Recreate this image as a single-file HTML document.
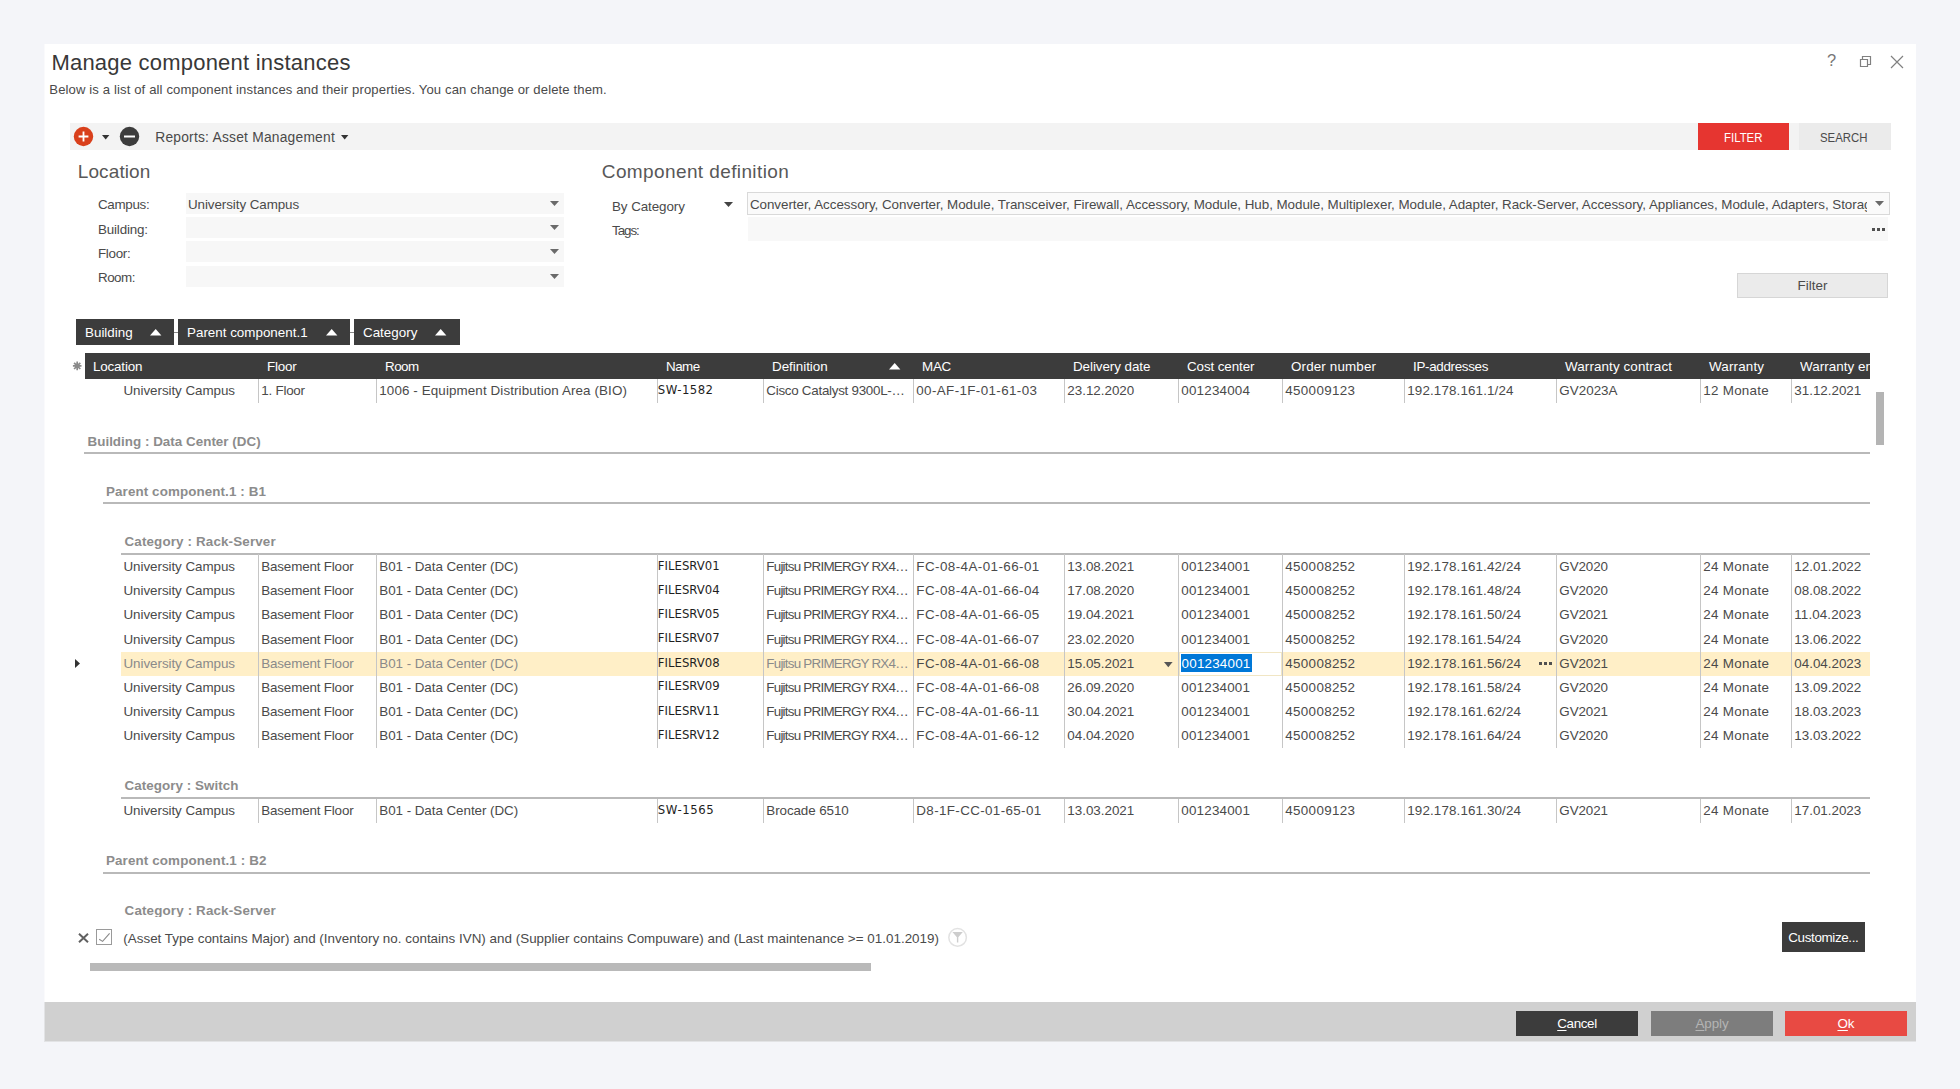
<!DOCTYPE html>
<html lang="en"><head><meta charset="utf-8"><title>Manage component instances</title>
<style>
html,body{margin:0;padding:0}
body{width:1960px;height:1089px;overflow:hidden;position:relative;background:#f4f5f9;font-family:"Liberation Sans",sans-serif;color:#404040}
.b{position:absolute}
.t{position:absolute;white-space:nowrap;color:#4a4a4a}
.w{color:#fff}
.g{color:#8a8a8a}
.gh{color:#8c8c8c;font-weight:bold}
.nm{color:#1e1e1e}
svg{position:absolute;overflow:visible}
u{text-decoration-thickness:1px;text-underline-offset:1.5px}
</style></head><body>

<div class="b" style="left:45px;top:44px;width:1871px;height:997px;background:#fff;"></div>
<div class="b" style="left:44px;top:44px;width:1px;height:958px;background:#fafafc;"></div>
<div class="b" style="left:45px;top:1041px;width:1871px;height:1px;background:#e2e3e5;"></div>
<div class="b" style="left:44px;top:1002px;width:1px;height:40px;background:#e2e3e5;"></div>
<div class="t" style="left:51.40px;top:50px;height:25px;line-height:25px;font-size:22px;letter-spacing:0.219px;color:#383838">Manage component instances</div>
<div class="t" style="left:49.30px;top:82px;height:15px;line-height:15px;font-size:13.1px;letter-spacing:0.123px;">Below is a list of all component instances and their properties. You can change or delete them.</div>
<div class="t" style="left:1827.00px;top:51px;height:18px;line-height:18px;font-size:16.5px;color:#777">?</div>
<svg style="left:1859px;top:55px" width="13" height="13" viewBox="0 0 13 13"><path d="M1.5 4.5h7v7h-7zM3.5 4.5v-3h8v8h-3" fill="none" stroke="#808080" stroke-width="1.2"/></svg>
<svg style="left:1890px;top:55px" width="14" height="14" viewBox="0 0 14 14"><path d="M1 1l12 12M13 1L1 13" fill="none" stroke="#808080" stroke-width="1.2"/></svg>
<div class="b" style="left:70px;top:123px;width:1821px;height:27px;background:#f3f3f3;"></div>
<svg style="left:73px;top:126px" width="21" height="21" viewBox="0 0 21 21"><circle cx="10.5" cy="10.5" r="9.7" fill="#d9401c"/><path d="M10.5 5.6v9.8M5.6 10.5h9.8" stroke="#fff" stroke-width="1.8" fill="none"/></svg>
<svg style="left:102px;top:134.5px" width="8" height="5" viewBox="0 0 8 5"><path d="M0 0h7.4L3.7 4.4z" fill="#333"/></svg>
<svg style="left:119px;top:126px" width="21" height="21" viewBox="0 0 21 21"><circle cx="10.5" cy="10.5" r="9.7" fill="#3d3d3d"/><path d="M5 10.5h11" stroke="#fff" stroke-width="2" fill="none"/></svg>
<div class="t" style="left:155.20px;top:130px;height:15px;line-height:15px;font-size:13.8px;letter-spacing:0.228px;">Reports: Asset Management</div>
<svg style="left:341px;top:134.5px" width="8" height="5" viewBox="0 0 8 5"><path d="M0 0h7.4L3.7 4.4z" fill="#333"/></svg>
<div class="b" style="left:1698px;top:123px;width:91px;height:27px;background:#e63530;"></div>
<div class="t w" style="left:1724.00px;top:130px;height:15px;line-height:15px;font-size:13.4px;transform-origin:0 0;transform:scaleX(0.8524);">FILTER</div>
<div class="b" style="left:1799px;top:123px;width:92px;height:27px;background:#ebebeb;"></div>
<div class="t" style="left:1820.00px;top:130px;height:15px;line-height:15px;font-size:13.4px;transform-origin:0 0;transform:scaleX(0.8505);">SEARCH</div>
<div class="t" style="left:77.80px;top:161px;height:21px;line-height:21px;font-size:19px;letter-spacing:0.095px;color:#585858">Location</div>
<div class="b" style="left:186px;top:193px;width:378px;height:21px;background:#f7f7f7;"></div>
<div class="t" style="left:98.00px;top:197px;height:15px;line-height:15px;font-size:13.4px;letter-spacing:-0.312px;">Campus:</div>
<svg style="left:550px;top:201px" width="10" height="6" viewBox="0 0 10 6"><path d="M0 0h9L4.5 5z" fill="#6a6a6a"/></svg>
<div class="b" style="left:186px;top:217px;width:378px;height:21px;background:#f7f7f7;"></div>
<div class="t" style="left:98.00px;top:222px;height:15px;line-height:15px;font-size:13.4px;letter-spacing:-0.163px;">Building:</div>
<svg style="left:550px;top:225px" width="10" height="6" viewBox="0 0 10 6"><path d="M0 0h9L4.5 5z" fill="#6a6a6a"/></svg>
<div class="b" style="left:186px;top:241px;width:378px;height:21px;background:#f7f7f7;"></div>
<div class="t" style="left:98.00px;top:246px;height:15px;line-height:15px;font-size:13.4px;letter-spacing:-0.311px;">Floor:</div>
<svg style="left:550px;top:249px" width="10" height="6" viewBox="0 0 10 6"><path d="M0 0h9L4.5 5z" fill="#6a6a6a"/></svg>
<div class="b" style="left:186px;top:266px;width:378px;height:21px;background:#f7f7f7;"></div>
<div class="t" style="left:98.00px;top:270px;height:15px;line-height:15px;font-size:13.4px;letter-spacing:-0.517px;">Room:</div>
<svg style="left:550px;top:274px" width="10" height="6" viewBox="0 0 10 6"><path d="M0 0h9L4.5 5z" fill="#6a6a6a"/></svg>
<div class="t" style="left:188.00px;top:197px;height:15px;line-height:15px;font-size:13.4px;letter-spacing:-0.075px;">University Campus</div>
<div class="t" style="left:601.80px;top:161px;height:21px;line-height:21px;font-size:19px;letter-spacing:0.391px;color:#585858">Component definition</div>
<div class="t" style="left:612.00px;top:199px;height:15px;line-height:15px;font-size:13.4px;letter-spacing:-0.073px;">By Category</div>
<svg style="left:724px;top:202px" width="10" height="6" viewBox="0 0 10 6"><path d="M0 0h9L4.5 5z" fill="#444"/></svg>
<div class="t" style="left:612.00px;top:223px;height:15px;line-height:15px;font-size:13.4px;letter-spacing:-1.057px;">Tags:</div>
<div class="b" style="left:747px;top:192px;width:1143px;height:23px;background:#fafafa;box-sizing:border-box;border:1px solid #d9d9d9"></div>
<div class="t" style="left:749.90px;top:197px;height:15px;line-height:15px;font-size:13.4px;width:1117.00px;overflow:hidden;letter-spacing:-0.04px">Converter, Accessory, Converter, Module, Transceiver, Firewall, Accessory, Module, Hub, Module, Multiplexer, Module, Adapter, Rack-Server, Accessory, Appliances, Module, Adapters, Storage</div>
<svg style="left:1875px;top:201px" width="10" height="6" viewBox="0 0 10 6"><path d="M0 0h9L4.5 5z" fill="#6a6a6a"/></svg>
<div class="b" style="left:748px;top:217px;width:1140px;height:24px;background:#f8f8f8;"></div>
<div class="b" style="left:1872px;top:228px;width:3px;height:3px;background:#505050;"></div>
<div class="b" style="left:1877px;top:228px;width:3px;height:3px;background:#505050;"></div>
<div class="b" style="left:1882px;top:228px;width:3px;height:3px;background:#505050;"></div>
<div class="b" style="left:1737px;top:273px;width:151px;height:25px;background:#ebebeb;box-sizing:border-box;border:1px solid #d6d6d6"></div>
<div class="t" style="left:1737.00px;top:278px;height:15px;line-height:15px;font-size:13.4px;width:151.00px;overflow:hidden;text-align:center">Filter</div>
<div class="b" style="left:174px;top:332px;width:4px;height:1px;background:#888;"></div>
<div class="b" style="left:350px;top:332px;width:4px;height:1px;background:#888;"></div>
<div class="b" style="left:76px;top:319px;width:98px;height:26px;background:#3c3c3c;"></div>
<div class="t w" style="left:85.00px;top:325px;height:15px;line-height:15px;font-size:13.4px;">Building</div>
<svg style="left:150px;top:329px" width="12" height="7" viewBox="0 0 12 7"><path d="M0 6.6h11.4L5.7 0z" fill="#fff"/></svg>
<div class="b" style="left:178px;top:319px;width:172px;height:26px;background:#3c3c3c;"></div>
<div class="t w" style="left:187.00px;top:325px;height:15px;line-height:15px;font-size:13.4px;">Parent component.1</div>
<svg style="left:326px;top:329px" width="12" height="7" viewBox="0 0 12 7"><path d="M0 6.6h11.4L5.7 0z" fill="#fff"/></svg>
<div class="b" style="left:354px;top:319px;width:106px;height:26px;background:#3c3c3c;"></div>
<div class="t w" style="left:363.00px;top:325px;height:15px;line-height:15px;font-size:13.4px;">Category</div>
<svg style="left:435px;top:329px" width="12" height="7" viewBox="0 0 12 7"><path d="M0 6.6h11.4L5.7 0z" fill="#fff"/></svg>
<div class="b" style="left:85px;top:353px;width:1785px;height:26px;background:#3c3c3c;"></div>
<div class="t w" style="left:93.00px;top:359px;height:15px;line-height:15px;font-size:13.4px;letter-spacing:-0.166px;">Location</div>
<div class="t w" style="left:267.00px;top:359px;height:15px;line-height:15px;font-size:13.4px;letter-spacing:-0.195px;">Floor</div>
<div class="t w" style="left:385.00px;top:359px;height:15px;line-height:15px;font-size:13.4px;letter-spacing:-0.499px;">Room</div>
<div class="t w" style="left:666.00px;top:359px;height:15px;line-height:15px;font-size:13.4px;letter-spacing:-0.499px;">Name</div>
<div class="t w" style="left:772.00px;top:359px;height:15px;line-height:15px;font-size:13.4px;letter-spacing:-0.013px;">Definition</div>
<div class="t w" style="left:922.00px;top:359px;height:15px;line-height:15px;font-size:13.4px;letter-spacing:-0.264px;">MAC</div>
<div class="t w" style="left:1073.00px;top:359px;height:15px;line-height:15px;font-size:13.4px;letter-spacing:-0.059px;">Delivery date</div>
<div class="t w" style="left:1187.00px;top:359px;height:15px;line-height:15px;font-size:13.4px;letter-spacing:-0.102px;">Cost center</div>
<div class="t w" style="left:1291.00px;top:359px;height:15px;line-height:15px;font-size:13.4px;letter-spacing:0.144px;">Order number</div>
<div class="t w" style="left:1413.00px;top:359px;height:15px;line-height:15px;font-size:13.4px;letter-spacing:-0.314px;">IP-addresses</div>
<div class="t w" style="left:1565.00px;top:359px;height:15px;line-height:15px;font-size:13.4px;letter-spacing:0.110px;">Warranty contract</div>
<div class="t w" style="left:1709.00px;top:359px;height:15px;line-height:15px;font-size:13.4px;letter-spacing:0.163px;">Warranty</div>
<div class="t w" style="left:1800.00px;top:359px;height:15px;line-height:15px;font-size:13.4px;width:70.00px;overflow:hidden;letter-spacing:0.051px;">Warranty end</div>
<svg style="left:888.6px;top:363px" width="12" height="7" viewBox="0 0 12 7"><path d="M0 6.6h11.4L5.7 0z" fill="#fff"/></svg>
<svg style="left:72px;top:361px" width="10" height="10" viewBox="0 0 10 10"><g stroke="#8a8a8a" stroke-width="1.7"><path d="M5.2 0.6v8.6M0.9 4.9h8.6M2.1 1.8l6.2 6.2M8.3 1.8L2.1 8"/></g><circle cx="5.2" cy="4.9" r="2.4" fill="#8a8a8a"/></svg>
<div class="t" style="left:123.50px;top:383px;height:15px;line-height:15px;font-size:13.4px;letter-spacing:-0.053px;">University Campus</div>
<div class="t" style="left:261.30px;top:383px;height:15px;line-height:15px;font-size:13.4px;letter-spacing:-0.240px;">1. Floor</div>
<div class="t" style="left:379.30px;top:383px;height:15px;line-height:15px;font-size:13.4px;letter-spacing:0.108px;">1006 - Equipment Distribution Area (BIO)</div>
<div class="t nm" style="left:657.80px;top:382px;height:15px;line-height:15px;font-size:13px;letter-spacing:0.468px;font-family:'DejaVu Sans Condensed','DejaVu Sans',sans-serif">SW-1582</div>
<div class="t" style="left:766.30px;top:383px;height:15px;line-height:15px;font-size:13.4px;letter-spacing:-0.273px;">Cisco Catalyst 9300L-…</div>
<div class="t" style="left:916.30px;top:383px;height:15px;line-height:15px;font-size:13.4px;letter-spacing:0.378px;">00-AF-1F-01-61-03</div>
<div class="t" style="left:1067.30px;top:383px;height:15px;line-height:15px;font-size:13.4px;letter-spacing:-0.007px;">23.12.2020</div>
<div class="t" style="left:1181.30px;top:383px;height:15px;line-height:15px;font-size:13.4px;letter-spacing:0.203px;">001234004</div>
<div class="t" style="left:1285.30px;top:383px;height:15px;line-height:15px;font-size:13.4px;letter-spacing:0.328px;">450009123</div>
<div class="t" style="left:1407.30px;top:383px;height:15px;line-height:15px;font-size:13.4px;letter-spacing:0.128px;">192.178.161.1/24</div>
<div class="t" style="left:1559.30px;top:383px;height:15px;line-height:15px;font-size:13.4px;letter-spacing:0.023px;">GV2023A</div>
<div class="t" style="left:1703.30px;top:383px;height:15px;line-height:15px;font-size:13.4px;letter-spacing:0.272px;">12 Monate</div>
<div class="t" style="left:1794.30px;top:383px;height:15px;line-height:15px;font-size:13.4px;letter-spacing:-0.007px;">31.12.2021</div>
<div class="b" style="left:1876px;top:392px;width:8px;height:53px;background:#b4b4b4;"></div>
<div class="t gh" style="left:87.50px;top:434px;height:15px;line-height:15px;font-size:13.4px;letter-spacing:0.021px;">Building : Data Center (DC)</div>
<div class="b" style="left:84px;top:452px;width:1786px;height:2px;background:#b9b9b9;"></div>
<div class="t gh" style="left:106.00px;top:484px;height:15px;line-height:15px;font-size:13.4px;letter-spacing:0.098px;">Parent component.1 : B1</div>
<div class="b" style="left:103px;top:502px;width:1767px;height:2px;background:#b9b9b9;"></div>
<div class="t gh" style="left:124.50px;top:534px;height:15px;line-height:15px;font-size:13.4px;letter-spacing:0.144px;">Category : Rack-Server</div>
<div class="b" style="left:121px;top:552.5px;width:1749px;height:2px;background:#b9b9b9;"></div>
<div class="t" style="left:123.50px;top:559px;height:15px;line-height:15px;font-size:13.4px;letter-spacing:-0.053px;">University Campus</div>
<div class="t" style="left:261.30px;top:559px;height:15px;line-height:15px;font-size:13.4px;letter-spacing:-0.168px;">Basement Floor</div>
<div class="t" style="left:379.30px;top:559px;height:15px;line-height:15px;font-size:13.4px;letter-spacing:-0.048px;">B01 - Data Center (DC)</div>
<div class="t nm" style="left:657.80px;top:558px;height:15px;line-height:15px;font-size:13px;letter-spacing:0.001px;font-family:'DejaVu Sans Condensed','DejaVu Sans',sans-serif">FILESRV01</div>
<div class="t" style="left:766.30px;top:559px;height:15px;line-height:15px;font-size:13.4px;letter-spacing:-0.761px;">Fujitsu PRIMERGY RX4…</div>
<div class="t" style="left:916.30px;top:559px;height:15px;line-height:15px;font-size:13.4px;letter-spacing:0.426px;">FC-08-4A-01-66-01</div>
<div class="t" style="left:1067.30px;top:559px;height:15px;line-height:15px;font-size:13.4px;letter-spacing:-0.007px;">13.08.2021</div>
<div class="t" style="left:1181.30px;top:559px;height:15px;line-height:15px;font-size:13.4px;letter-spacing:0.203px;">001234001</div>
<div class="t" style="left:1285.30px;top:559px;height:15px;line-height:15px;font-size:13.4px;letter-spacing:0.328px;">450008252</div>
<div class="t" style="left:1407.30px;top:559px;height:15px;line-height:15px;font-size:13.4px;letter-spacing:0.120px;">192.178.161.42/24</div>
<div class="t" style="left:1559.30px;top:559px;height:15px;line-height:15px;font-size:13.4px;letter-spacing:-0.074px;">GV2020</div>
<div class="t" style="left:1703.30px;top:559px;height:15px;line-height:15px;font-size:13.4px;letter-spacing:0.297px;">24 Monate</div>
<div class="t" style="left:1794.30px;top:559px;height:15px;line-height:15px;font-size:13.4px;letter-spacing:-0.007px;">12.01.2022</div>
<div class="t" style="left:123.50px;top:583px;height:15px;line-height:15px;font-size:13.4px;letter-spacing:-0.053px;">University Campus</div>
<div class="t" style="left:261.30px;top:583px;height:15px;line-height:15px;font-size:13.4px;letter-spacing:-0.168px;">Basement Floor</div>
<div class="t" style="left:379.30px;top:583px;height:15px;line-height:15px;font-size:13.4px;letter-spacing:-0.048px;">B01 - Data Center (DC)</div>
<div class="t nm" style="left:657.80px;top:582px;height:15px;line-height:15px;font-size:13px;letter-spacing:0.001px;font-family:'DejaVu Sans Condensed','DejaVu Sans',sans-serif">FILESRV04</div>
<div class="t" style="left:766.30px;top:583px;height:15px;line-height:15px;font-size:13.4px;letter-spacing:-0.761px;">Fujitsu PRIMERGY RX4…</div>
<div class="t" style="left:916.30px;top:583px;height:15px;line-height:15px;font-size:13.4px;letter-spacing:0.426px;">FC-08-4A-01-66-04</div>
<div class="t" style="left:1067.30px;top:583px;height:15px;line-height:15px;font-size:13.4px;letter-spacing:-0.007px;">17.08.2020</div>
<div class="t" style="left:1181.30px;top:583px;height:15px;line-height:15px;font-size:13.4px;letter-spacing:0.203px;">001234001</div>
<div class="t" style="left:1285.30px;top:583px;height:15px;line-height:15px;font-size:13.4px;letter-spacing:0.328px;">450008252</div>
<div class="t" style="left:1407.30px;top:583px;height:15px;line-height:15px;font-size:13.4px;letter-spacing:0.120px;">192.178.161.48/24</div>
<div class="t" style="left:1559.30px;top:583px;height:15px;line-height:15px;font-size:13.4px;letter-spacing:-0.074px;">GV2020</div>
<div class="t" style="left:1703.30px;top:583px;height:15px;line-height:15px;font-size:13.4px;letter-spacing:0.297px;">24 Monate</div>
<div class="t" style="left:1794.30px;top:583px;height:15px;line-height:15px;font-size:13.4px;letter-spacing:-0.007px;">08.08.2022</div>
<div class="t" style="left:123.50px;top:607px;height:15px;line-height:15px;font-size:13.4px;letter-spacing:-0.053px;">University Campus</div>
<div class="t" style="left:261.30px;top:607px;height:15px;line-height:15px;font-size:13.4px;letter-spacing:-0.168px;">Basement Floor</div>
<div class="t" style="left:379.30px;top:607px;height:15px;line-height:15px;font-size:13.4px;letter-spacing:-0.048px;">B01 - Data Center (DC)</div>
<div class="t nm" style="left:657.80px;top:606px;height:15px;line-height:15px;font-size:13px;letter-spacing:0.001px;font-family:'DejaVu Sans Condensed','DejaVu Sans',sans-serif">FILESRV05</div>
<div class="t" style="left:766.30px;top:607px;height:15px;line-height:15px;font-size:13.4px;letter-spacing:-0.761px;">Fujitsu PRIMERGY RX4…</div>
<div class="t" style="left:916.30px;top:607px;height:15px;line-height:15px;font-size:13.4px;letter-spacing:0.426px;">FC-08-4A-01-66-05</div>
<div class="t" style="left:1067.30px;top:607px;height:15px;line-height:15px;font-size:13.4px;letter-spacing:-0.007px;">19.04.2021</div>
<div class="t" style="left:1181.30px;top:607px;height:15px;line-height:15px;font-size:13.4px;letter-spacing:0.203px;">001234001</div>
<div class="t" style="left:1285.30px;top:607px;height:15px;line-height:15px;font-size:13.4px;letter-spacing:0.328px;">450008252</div>
<div class="t" style="left:1407.30px;top:607px;height:15px;line-height:15px;font-size:13.4px;letter-spacing:0.120px;">192.178.161.50/24</div>
<div class="t" style="left:1559.30px;top:607px;height:15px;line-height:15px;font-size:13.4px;letter-spacing:-0.074px;">GV2021</div>
<div class="t" style="left:1703.30px;top:607px;height:15px;line-height:15px;font-size:13.4px;letter-spacing:0.297px;">24 Monate</div>
<div class="t" style="left:1794.30px;top:607px;height:15px;line-height:15px;font-size:13.4px;letter-spacing:0.103px;">11.04.2023</div>
<div class="t" style="left:123.50px;top:632px;height:15px;line-height:15px;font-size:13.4px;letter-spacing:-0.053px;">University Campus</div>
<div class="t" style="left:261.30px;top:632px;height:15px;line-height:15px;font-size:13.4px;letter-spacing:-0.168px;">Basement Floor</div>
<div class="t" style="left:379.30px;top:632px;height:15px;line-height:15px;font-size:13.4px;letter-spacing:-0.048px;">B01 - Data Center (DC)</div>
<div class="t nm" style="left:657.80px;top:630px;height:15px;line-height:15px;font-size:13px;letter-spacing:0.001px;font-family:'DejaVu Sans Condensed','DejaVu Sans',sans-serif">FILESRV07</div>
<div class="t" style="left:766.30px;top:632px;height:15px;line-height:15px;font-size:13.4px;letter-spacing:-0.761px;">Fujitsu PRIMERGY RX4…</div>
<div class="t" style="left:916.30px;top:632px;height:15px;line-height:15px;font-size:13.4px;letter-spacing:0.426px;">FC-08-4A-01-66-07</div>
<div class="t" style="left:1067.30px;top:632px;height:15px;line-height:15px;font-size:13.4px;letter-spacing:-0.007px;">23.02.2020</div>
<div class="t" style="left:1181.30px;top:632px;height:15px;line-height:15px;font-size:13.4px;letter-spacing:0.203px;">001234001</div>
<div class="t" style="left:1285.30px;top:632px;height:15px;line-height:15px;font-size:13.4px;letter-spacing:0.328px;">450008252</div>
<div class="t" style="left:1407.30px;top:632px;height:15px;line-height:15px;font-size:13.4px;letter-spacing:0.120px;">192.178.161.54/24</div>
<div class="t" style="left:1559.30px;top:632px;height:15px;line-height:15px;font-size:13.4px;letter-spacing:-0.074px;">GV2020</div>
<div class="t" style="left:1703.30px;top:632px;height:15px;line-height:15px;font-size:13.4px;letter-spacing:0.297px;">24 Monate</div>
<div class="t" style="left:1794.30px;top:632px;height:15px;line-height:15px;font-size:13.4px;letter-spacing:-0.007px;">13.06.2022</div>
<div class="b" style="left:121px;top:652px;width:1749px;height:24px;background:#ffefc7;"></div>
<div class="t g" style="left:123.50px;top:656px;height:15px;line-height:15px;font-size:13.4px;letter-spacing:-0.053px;">University Campus</div>
<div class="t g" style="left:261.30px;top:656px;height:15px;line-height:15px;font-size:13.4px;letter-spacing:-0.168px;">Basement Floor</div>
<div class="t g" style="left:379.30px;top:656px;height:15px;line-height:15px;font-size:13.4px;letter-spacing:-0.048px;">B01 - Data Center (DC)</div>
<div class="t nm" style="left:657.80px;top:655px;height:15px;line-height:15px;font-size:13px;letter-spacing:0.001px;font-family:'DejaVu Sans Condensed','DejaVu Sans',sans-serif">FILESRV08</div>
<div class="t g" style="left:766.30px;top:656px;height:15px;line-height:15px;font-size:13.4px;letter-spacing:-0.761px;">Fujitsu PRIMERGY RX4…</div>
<div class="t" style="left:916.30px;top:656px;height:15px;line-height:15px;font-size:13.4px;letter-spacing:0.426px;">FC-08-4A-01-66-08</div>
<div class="t" style="left:1067.30px;top:656px;height:15px;line-height:15px;font-size:13.4px;letter-spacing:-0.007px;">15.05.2021</div>
<div class="t" style="left:1285.30px;top:656px;height:15px;line-height:15px;font-size:13.4px;letter-spacing:0.328px;">450008252</div>
<div class="t" style="left:1407.30px;top:656px;height:15px;line-height:15px;font-size:13.4px;letter-spacing:0.120px;">192.178.161.56/24</div>
<div class="t" style="left:1559.30px;top:656px;height:15px;line-height:15px;font-size:13.4px;letter-spacing:-0.074px;">GV2021</div>
<div class="t" style="left:1703.30px;top:656px;height:15px;line-height:15px;font-size:13.4px;letter-spacing:0.297px;">24 Monate</div>
<div class="t" style="left:1794.30px;top:656px;height:15px;line-height:15px;font-size:13.4px;letter-spacing:-0.007px;">04.04.2023</div>
<div class="t" style="left:123.50px;top:680px;height:15px;line-height:15px;font-size:13.4px;letter-spacing:-0.053px;">University Campus</div>
<div class="t" style="left:261.30px;top:680px;height:15px;line-height:15px;font-size:13.4px;letter-spacing:-0.168px;">Basement Floor</div>
<div class="t" style="left:379.30px;top:680px;height:15px;line-height:15px;font-size:13.4px;letter-spacing:-0.048px;">B01 - Data Center (DC)</div>
<div class="t nm" style="left:657.80px;top:678px;height:15px;line-height:15px;font-size:13px;letter-spacing:0.001px;font-family:'DejaVu Sans Condensed','DejaVu Sans',sans-serif">FILESRV09</div>
<div class="t" style="left:766.30px;top:680px;height:15px;line-height:15px;font-size:13.4px;letter-spacing:-0.761px;">Fujitsu PRIMERGY RX4…</div>
<div class="t" style="left:916.30px;top:680px;height:15px;line-height:15px;font-size:13.4px;letter-spacing:0.426px;">FC-08-4A-01-66-08</div>
<div class="t" style="left:1067.30px;top:680px;height:15px;line-height:15px;font-size:13.4px;letter-spacing:-0.007px;">26.09.2020</div>
<div class="t" style="left:1181.30px;top:680px;height:15px;line-height:15px;font-size:13.4px;letter-spacing:0.203px;">001234001</div>
<div class="t" style="left:1285.30px;top:680px;height:15px;line-height:15px;font-size:13.4px;letter-spacing:0.328px;">450008252</div>
<div class="t" style="left:1407.30px;top:680px;height:15px;line-height:15px;font-size:13.4px;letter-spacing:0.120px;">192.178.161.58/24</div>
<div class="t" style="left:1559.30px;top:680px;height:15px;line-height:15px;font-size:13.4px;letter-spacing:-0.074px;">GV2020</div>
<div class="t" style="left:1703.30px;top:680px;height:15px;line-height:15px;font-size:13.4px;letter-spacing:0.297px;">24 Monate</div>
<div class="t" style="left:1794.30px;top:680px;height:15px;line-height:15px;font-size:13.4px;letter-spacing:-0.007px;">13.09.2022</div>
<div class="t" style="left:123.50px;top:704px;height:15px;line-height:15px;font-size:13.4px;letter-spacing:-0.053px;">University Campus</div>
<div class="t" style="left:261.30px;top:704px;height:15px;line-height:15px;font-size:13.4px;letter-spacing:-0.168px;">Basement Floor</div>
<div class="t" style="left:379.30px;top:704px;height:15px;line-height:15px;font-size:13.4px;letter-spacing:-0.048px;">B01 - Data Center (DC)</div>
<div class="t nm" style="left:657.80px;top:703px;height:15px;line-height:15px;font-size:13px;letter-spacing:0.001px;font-family:'DejaVu Sans Condensed','DejaVu Sans',sans-serif">FILESRV11</div>
<div class="t" style="left:766.30px;top:704px;height:15px;line-height:15px;font-size:13.4px;letter-spacing:-0.761px;">Fujitsu PRIMERGY RX4…</div>
<div class="t" style="left:916.30px;top:704px;height:15px;line-height:15px;font-size:13.4px;letter-spacing:0.488px;">FC-08-4A-01-66-11</div>
<div class="t" style="left:1067.30px;top:704px;height:15px;line-height:15px;font-size:13.4px;letter-spacing:-0.007px;">30.04.2021</div>
<div class="t" style="left:1181.30px;top:704px;height:15px;line-height:15px;font-size:13.4px;letter-spacing:0.203px;">001234001</div>
<div class="t" style="left:1285.30px;top:704px;height:15px;line-height:15px;font-size:13.4px;letter-spacing:0.328px;">450008252</div>
<div class="t" style="left:1407.30px;top:704px;height:15px;line-height:15px;font-size:13.4px;letter-spacing:0.120px;">192.178.161.62/24</div>
<div class="t" style="left:1559.30px;top:704px;height:15px;line-height:15px;font-size:13.4px;letter-spacing:-0.074px;">GV2021</div>
<div class="t" style="left:1703.30px;top:704px;height:15px;line-height:15px;font-size:13.4px;letter-spacing:0.297px;">24 Monate</div>
<div class="t" style="left:1794.30px;top:704px;height:15px;line-height:15px;font-size:13.4px;letter-spacing:-0.007px;">18.03.2023</div>
<div class="t" style="left:123.50px;top:728px;height:15px;line-height:15px;font-size:13.4px;letter-spacing:-0.053px;">University Campus</div>
<div class="t" style="left:261.30px;top:728px;height:15px;line-height:15px;font-size:13.4px;letter-spacing:-0.168px;">Basement Floor</div>
<div class="t" style="left:379.30px;top:728px;height:15px;line-height:15px;font-size:13.4px;letter-spacing:-0.048px;">B01 - Data Center (DC)</div>
<div class="t nm" style="left:657.80px;top:727px;height:15px;line-height:15px;font-size:13px;letter-spacing:0.001px;font-family:'DejaVu Sans Condensed','DejaVu Sans',sans-serif">FILESRV12</div>
<div class="t" style="left:766.30px;top:728px;height:15px;line-height:15px;font-size:13.4px;letter-spacing:-0.761px;">Fujitsu PRIMERGY RX4…</div>
<div class="t" style="left:916.30px;top:728px;height:15px;line-height:15px;font-size:13.4px;letter-spacing:0.426px;">FC-08-4A-01-66-12</div>
<div class="t" style="left:1067.30px;top:728px;height:15px;line-height:15px;font-size:13.4px;letter-spacing:-0.007px;">04.04.2020</div>
<div class="t" style="left:1181.30px;top:728px;height:15px;line-height:15px;font-size:13.4px;letter-spacing:0.203px;">001234001</div>
<div class="t" style="left:1285.30px;top:728px;height:15px;line-height:15px;font-size:13.4px;letter-spacing:0.328px;">450008252</div>
<div class="t" style="left:1407.30px;top:728px;height:15px;line-height:15px;font-size:13.4px;letter-spacing:0.120px;">192.178.161.64/24</div>
<div class="t" style="left:1559.30px;top:728px;height:15px;line-height:15px;font-size:13.4px;letter-spacing:-0.074px;">GV2020</div>
<div class="t" style="left:1703.30px;top:728px;height:15px;line-height:15px;font-size:13.4px;letter-spacing:0.297px;">24 Monate</div>
<div class="t" style="left:1794.30px;top:728px;height:15px;line-height:15px;font-size:13.4px;letter-spacing:-0.007px;">13.03.2022</div>
<div class="b" style="left:258px;top:379px;width:1px;height:24px;background:#c6c6c6;"></div>
<div class="b" style="left:376px;top:379px;width:1px;height:24px;background:#c6c6c6;"></div>
<div class="b" style="left:657px;top:379px;width:1px;height:24px;background:#c6c6c6;"></div>
<div class="b" style="left:763px;top:379px;width:1px;height:24px;background:#c6c6c6;"></div>
<div class="b" style="left:913px;top:379px;width:1px;height:24px;background:#c6c6c6;"></div>
<div class="b" style="left:1064px;top:379px;width:1px;height:24px;background:#c6c6c6;"></div>
<div class="b" style="left:1178px;top:379px;width:1px;height:24px;background:#c6c6c6;"></div>
<div class="b" style="left:1282px;top:379px;width:1px;height:24px;background:#c6c6c6;"></div>
<div class="b" style="left:1404px;top:379px;width:1px;height:24px;background:#c6c6c6;"></div>
<div class="b" style="left:1556px;top:379px;width:1px;height:24px;background:#c6c6c6;"></div>
<div class="b" style="left:1700px;top:379px;width:1px;height:24px;background:#c6c6c6;"></div>
<div class="b" style="left:1791px;top:379px;width:1px;height:24px;background:#c6c6c6;"></div>
<div class="b" style="left:258px;top:554px;width:1px;height:194px;background:#c6c6c6;"></div>
<div class="b" style="left:376px;top:554px;width:1px;height:194px;background:#c6c6c6;"></div>
<div class="b" style="left:657px;top:554px;width:1px;height:194px;background:#c6c6c6;"></div>
<div class="b" style="left:763px;top:554px;width:1px;height:194px;background:#c6c6c6;"></div>
<div class="b" style="left:913px;top:554px;width:1px;height:194px;background:#c6c6c6;"></div>
<div class="b" style="left:1064px;top:554px;width:1px;height:194px;background:#c6c6c6;"></div>
<div class="b" style="left:1178px;top:554px;width:1px;height:194px;background:#c6c6c6;"></div>
<div class="b" style="left:1282px;top:554px;width:1px;height:194px;background:#c6c6c6;"></div>
<div class="b" style="left:1404px;top:554px;width:1px;height:194px;background:#c6c6c6;"></div>
<div class="b" style="left:1556px;top:554px;width:1px;height:194px;background:#c6c6c6;"></div>
<div class="b" style="left:1700px;top:554px;width:1px;height:194px;background:#c6c6c6;"></div>
<div class="b" style="left:1791px;top:554px;width:1px;height:194px;background:#c6c6c6;"></div>
<div class="b" style="left:258px;top:799px;width:1px;height:24px;background:#c6c6c6;"></div>
<div class="b" style="left:376px;top:799px;width:1px;height:24px;background:#c6c6c6;"></div>
<div class="b" style="left:657px;top:799px;width:1px;height:24px;background:#c6c6c6;"></div>
<div class="b" style="left:763px;top:799px;width:1px;height:24px;background:#c6c6c6;"></div>
<div class="b" style="left:913px;top:799px;width:1px;height:24px;background:#c6c6c6;"></div>
<div class="b" style="left:1064px;top:799px;width:1px;height:24px;background:#c6c6c6;"></div>
<div class="b" style="left:1178px;top:799px;width:1px;height:24px;background:#c6c6c6;"></div>
<div class="b" style="left:1282px;top:799px;width:1px;height:24px;background:#c6c6c6;"></div>
<div class="b" style="left:1404px;top:799px;width:1px;height:24px;background:#c6c6c6;"></div>
<div class="b" style="left:1556px;top:799px;width:1px;height:24px;background:#c6c6c6;"></div>
<div class="b" style="left:1700px;top:799px;width:1px;height:24px;background:#c6c6c6;"></div>
<div class="b" style="left:1791px;top:799px;width:1px;height:24px;background:#c6c6c6;"></div>
<div class="b" style="left:1179px;top:652px;width:103px;height:24px;background:#fff;box-sizing:border-box;border:1px solid #f1e6c4"></div>
<div class="b" style="left:1181px;top:654px;width:71px;height:18px;background:#0078d7;"></div>
<div class="t w" style="left:1181.60px;top:656px;height:15px;line-height:15px;font-size:13.4px;letter-spacing:0.203px;">001234001</div>
<svg style="left:1163.5px;top:661.5px" width="9" height="6" viewBox="0 0 9 6"><path d="M0 0h8.6L4.3 5.2z" fill="#555"/></svg>
<div class="b" style="left:1539px;top:662px;width:3px;height:3px;background:#505050;"></div>
<div class="b" style="left:1544px;top:662px;width:3px;height:3px;background:#505050;"></div>
<div class="b" style="left:1549px;top:662px;width:3px;height:3px;background:#505050;"></div>
<svg style="left:75px;top:658.5px" width="6" height="10" viewBox="0 0 6 10"><path d="M0 0v9L5 4.5z" fill="#333"/></svg>
<div class="t gh" style="left:124.50px;top:778px;height:15px;line-height:15px;font-size:13.4px;letter-spacing:0.051px;">Category : Switch</div>
<div class="b" style="left:121px;top:797px;width:1749px;height:2px;background:#b9b9b9;"></div>
<div class="t" style="left:123.50px;top:803px;height:15px;line-height:15px;font-size:13.4px;letter-spacing:-0.053px;">University Campus</div>
<div class="t" style="left:261.30px;top:803px;height:15px;line-height:15px;font-size:13.4px;letter-spacing:-0.168px;">Basement Floor</div>
<div class="t" style="left:379.30px;top:803px;height:15px;line-height:15px;font-size:13.4px;letter-spacing:-0.048px;">B01 - Data Center (DC)</div>
<div class="t nm" style="left:657.80px;top:802px;height:15px;line-height:15px;font-size:13px;letter-spacing:0.593px;font-family:'DejaVu Sans Condensed','DejaVu Sans',sans-serif">SW-1565</div>
<div class="t" style="left:766.30px;top:803px;height:15px;line-height:15px;font-size:13.4px;letter-spacing:-0.086px;">Brocade 6510</div>
<div class="t" style="left:916.30px;top:803px;height:15px;line-height:15px;font-size:13.4px;letter-spacing:0.365px;">D8-1F-CC-01-65-01</div>
<div class="t" style="left:1067.30px;top:803px;height:15px;line-height:15px;font-size:13.4px;letter-spacing:-0.007px;">13.03.2021</div>
<div class="t" style="left:1181.30px;top:803px;height:15px;line-height:15px;font-size:13.4px;letter-spacing:0.203px;">001234001</div>
<div class="t" style="left:1285.30px;top:803px;height:15px;line-height:15px;font-size:13.4px;letter-spacing:0.328px;">450009123</div>
<div class="t" style="left:1407.30px;top:803px;height:15px;line-height:15px;font-size:13.4px;letter-spacing:0.120px;">192.178.161.30/24</div>
<div class="t" style="left:1559.30px;top:803px;height:15px;line-height:15px;font-size:13.4px;letter-spacing:-0.074px;">GV2021</div>
<div class="t" style="left:1703.30px;top:803px;height:15px;line-height:15px;font-size:13.4px;letter-spacing:0.297px;">24 Monate</div>
<div class="t" style="left:1794.30px;top:803px;height:15px;line-height:15px;font-size:13.4px;letter-spacing:-0.007px;">17.01.2023</div>
<div class="t gh" style="left:106.00px;top:853px;height:15px;line-height:15px;font-size:13.4px;letter-spacing:0.120px;">Parent component.1 : B2</div>
<div class="b" style="left:103px;top:872px;width:1767px;height:2px;background:#b9b9b9;"></div>
<div class="b" style="left:121px;top:896px;width:500px;height:21px;overflow:hidden">
<div class="t gh" style="left:3.60px;top:7px;height:15px;line-height:15px;font-size:13.4px;letter-spacing:0.144px;">Category : Rack-Server</div>
</div>
<svg style="left:78px;top:933px" width="11" height="10" viewBox="0 0 11 10"><path d="M1 0.8l9 8.4M10 0.8L1 9.2" stroke="#606060" stroke-width="2" fill="none"/></svg>
<div class="b" style="left:96px;top:929px;width:16px;height:16px;background:#fff;box-sizing:border-box;border:1px solid #9a9a9a"></div>
<svg style="left:96px;top:929px" width="17" height="17" viewBox="0 0 17 17"><path d="M3.2 10.2l3.4 2.2L13.6 4.4" stroke="#8a8a8a" stroke-width="1.1" fill="none"/></svg>
<div class="t" style="left:123.30px;top:931px;height:15px;line-height:15px;font-size:13.4px;letter-spacing:0.018px;">(Asset Type contains Major) and (Inventory no. contains IVN) and (Supplier contains Compuware) and (Last maintenance &gt;= 01.01.2019)</div>
<svg style="left:947px;top:927px" width="21" height="21" viewBox="0 0 21 21"><circle cx="10.6" cy="10.4" r="8.8" fill="#fff" stroke="#e2e2e2" stroke-width="1.5"/><path d="M5.4 5.1h10.4l-4.5 5.1v5.2h-1.4v-5.2z" fill="#cdcdcd"/></svg>
<div class="b" style="left:1782px;top:922px;width:83px;height:30px;background:#3c3c3c;"></div>
<div class="t w" style="left:1788.30px;top:930px;height:15px;line-height:15px;font-size:13.4px;letter-spacing:-0.361px;">Customize...</div>
<div class="b" style="left:90px;top:963px;width:781px;height:8px;background:#b9b9b9;"></div>
<div class="b" style="left:45px;top:1002px;width:1871px;height:39px;background:#d0d0d0;"></div>
<div class="b" style="left:1516px;top:1011px;width:122px;height:25px;background:#3c3c3c;"></div>
<div class="t w" style="left:1516.00px;top:1016px;height:15px;line-height:15px;font-size:13.4px;width:122.00px;overflow:hidden;text-align:center;letter-spacing:-0.35px"><u>C</u>ancel</div>
<div class="b" style="left:1651px;top:1011px;width:122px;height:25px;background:#7d7d7d;"></div>
<div class="t" style="left:1651.00px;top:1016px;height:15px;line-height:15px;font-size:13.4px;width:122.00px;overflow:hidden;text-align:center;color:#b4b4b4;letter-spacing:-0.1px"><u>A</u>pply</div>
<div class="b" style="left:1785px;top:1011px;width:122px;height:25px;background:#e84a43;"></div>
<div class="t w" style="left:1785.00px;top:1016px;height:15px;line-height:15px;font-size:13.4px;width:122.00px;overflow:hidden;text-align:center"><u>O</u>k</div>
</body></html>
